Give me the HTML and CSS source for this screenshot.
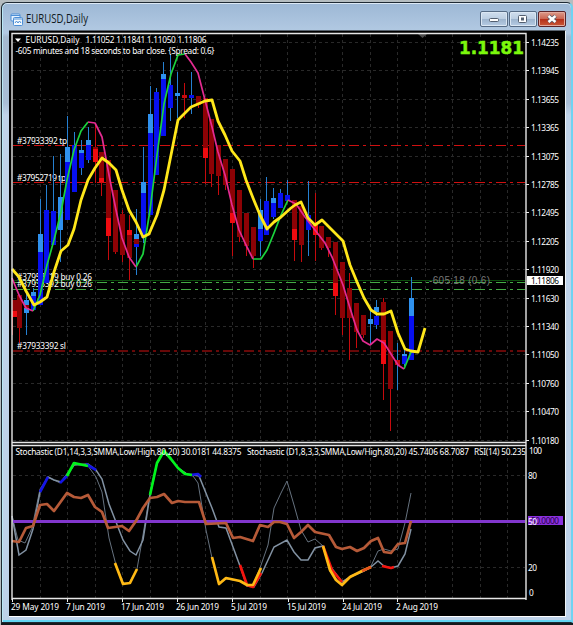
FILE: index.html
```html
<!DOCTYPE html>
<html lang="en">
<head>
<meta charset="utf-8">
<title>EURUSD,Daily</title>
<link rel="stylesheet" href="styles.css">
</head>
<body>
<div class="window">
  <header class="titlebar">
    <svg class="app-icon" width="13" height="13" viewBox="0 0 13 13">
      <rect x="1" y="1" width="9" height="7" rx="1" fill="#e8f3ff" stroke="#4d8fd6"/>
      <path d="M1 2.500h9" stroke="#4d8fd6"/>
      <rect x="3.500" y="4.500" width="9" height="8" rx="1" fill="#f4faff" stroke="#4d8fd6"/>
      <path d="M3.500 6h9M5 10l1.500-2 1.500 2 1.500-2 1.500 2" stroke="#4d8fd6" fill="none"/>
    </svg>
    <svg class="title" width="80" height="20"><text x="0" y="14" textLength="62" lengthAdjust="spacingAndGlyphs">EURUSD,Daily</text></svg>
    <div class="controls">
      <span class="btn"><svg width="26" height="14"><rect x="8.500" y="6.500" width="9" height="3" rx="1" fill="#fff" stroke="#535f70"/></svg></span>
      <span class="btn"><svg width="26" height="14"><rect x="8.500" y="3.500" width="8" height="7" rx="1" fill="#fff" stroke="#535f70"/><rect x="11.500" y="6" width="2" height="2" fill="#b8cbe0" stroke="#535f70"/></svg></span>
      <span class="btn close"><svg width="26" height="14"><path d="M9.500 4l7 6M16.500 4l-7 6" stroke="#555a68" stroke-width="4"/><path d="M9.500 4l7 6M16.500 4l-7 6" stroke="#fff" stroke-width="2.400"/></svg></span>
    </div>
  </header>
  <main class="panel">
    <svg id="chart" class="chart" width="556" height="585" viewBox="9 31 556 585">
      <g id="grid" class="grid"></g>
      <path d="M418 34h9l-4.500 4z" fill="#4a4a4a"/>
      <g class="order red"><path d="M13 145.500H525M13 182.500H525M13 351H525"/></g>
      <path d="M13 280.500H525" stroke="#0b4a0b"/>
      <g class="order green"><path d="M13 282.500H525M13 289.500H525"/></g>
      <g class="label">
        <text x="17" y="143.500" textLength="50">#37933392 tp</text>
        <text x="17" y="180.500" textLength="49">#37952719 tp</text>
        <text x="17" y="280" textLength="75">#37952719 buy 0.26</text>
        <text x="17" y="287" textLength="75">#37933392 buy 0.26</text>
        <text x="17" y="348.500" textLength="49">#37933392 sl</text>
      </g>
      <g id="candles"></g>
      <g class="hull up">
        <path d="M33 311L40 295 47 265 54 240 61 212 67 180 74 150 81 131 88 122"/>
        <path d="M136 267L143 254 150 210 157 155 164 104 171 74 178 55 185 54"/>
        <path d="M253 259H261L267 250 274 233 281 215 288 200"/>
        <path d="M404 369L411 352"/>
      </g>
      <g class="hull down">
        <path d="M12 278L19 295 26 308 33 311"/>
        <path d="M88 122L95 123 102 137 109 175 116 210 122 238 129 257 136 267"/>
        <path d="M185 54L191 62 198 73 205 100 212 127 218 152 225 175 232 205 239 230 246 245 253 259"/>
        <path d="M288 200L296 204 305 217 315 230 325 243 332 257 343 285 350 308 357 330 363 341 370 345 377 339 384 343 391 354 398 365 404 369"/>
      </g>
      <path class="average" d="M12 269L19 277 26 291 34 305 40 302 47 297 54 272 61 251 68 245 74 229 81 200 88 180 95 168 102 158 109 163 116 170 122 190 129 210 136 222 143 237 149 234 157 215 164 190 171 155 178 120 191 107 205 101 212 100 218 121 225 135 232 151 240 161 246 180 253 198 260 215 267 229 274 222 281 217 291 208 295 205 301 202 308 218 315 225 322 220 332 230 343 241 350 265 357 282 364 298 371 310 377 314 384 314 391 311 398 333 405 349 411 351 418 352 425 328"/>
      <text class="countdown" x="429" y="284" textLength="61">-605:18 (0.6)</text>
      <text class="price" x="459" y="54" textLength="65" lengthAdjust="spacingAndGlyphs">1.1181</text>
      <path d="M15 38.500h6l-3 3.500z" fill="#fff"/>
      <g class="label">
        <text x="25.500" y="43" textLength="54">EURUSD,Daily</text>
        <text x="85.500" y="43" textLength="121">1.11052 1.11841 1.11050 1.11806</text>
        <text x="15.500" y="54" textLength="199">-605 minutes and 18 seconds to bar close. {Spread: 0.6}</text>
      </g>

      <path class="fast" d="M12 516L18 540 25 543 32 528 40 489 48 477 60 483 74 464 88 466 96 477 102 492 109 538 116 565 123 583 129 583 137 569 143 535 150 493 157 463 164 451 178 468 187 474 193 476 198 483 206 530 212 558 219 584 226 579 240 581 252 587 260 568 268 545 274 508 281 493 287 481 294 505 301 530 308 542 315 539 323 546 330 572 342 585 350 576 364 570 371 566 378 551 384 549 391 551 398 549 405 523 411 493"/>
      <path class="slow" d="M12 516L19 555 26 550 33 529 40 492 48 477 54 480 61 482 67 475 74 465 88 464 96 470 102 479 109 504 116 522 123 540 130 551 136 555 143 540 150 495 157 463 164 451 178 468 187 474 199 476 212 508 219 527 226 528 233 547 240 566 247 586 254 587 262 573 274 547 287 540 294 552 301 560 308 560 315 548 323 546 330 566 342 582 350 577 364 571 371 567 378 561 384 566 391 568 398 566 405 554 411 529"/>
      <path d="M13 521.500H525" stroke="#8136cd" stroke-width="3"/>
      <g class="stoch">
        <path class="over" d="M40 492L48 477M60 483L67 476M86 464L96 470M190 475L198 474 201 477"/>
        <path class="peak" d="M67 476L74 463 88 466M150 495L157 463 164 451 171 459 178 468 185 474 192 475"/>
        <path class="low" d="M240 565L247 585 253 587 261 573M323 546L332 570 342 582M382 566L391 568 394 567"/>
        <path class="base" d="M115 563L123 584 130 583 137 569M212 557L219 584 226 578 240 581 247 585 253 585 261 568M323 546L330 570 336 580 342 585 350 577 364 570 371 567"/>
        <path class="end" d="M362 571L371 567"/>
      </g>
      <path class="rsi" d="M12 541L19 542 26 528 33 526 40 505 47 504 54 511 67 493 74 497 81 498 88 495 95 507 102 512 108 528 122 526 129 531 136 521 143 508 150 498 157 497 164 494 172 503 178 501 185 502 199 502 206 524 226 523 233 538 240 537 253 541 260 525 268 527 274 522 280 522 287 524 294 538 301 532 308 525 315 532 329 535 336 547 342 549 350 547 357 551 364 548 371 541 378 538 384 552 391 553 398 544 405 543 411 521"/>
      <g class="label">
        <text x="15.500" y="455" textLength="226">Stochastic (D1,14,3,3,SMMA,Low/High,80,20) 30.0181 44.8375</text>
        <text x="247" y="455" textLength="222">Stochastic (D1,8,3,3,SMMA,Low/High,80,20) 45.7406 68.7087</text>
        <text x="474" y="455" textLength="52">RSI(14) 50.235</text>
      </g>
      <rect x="525.500" y="445" width="9" height="15" fill="#000"/>
      <path class="frame" d="M12 600V33.500H526V600M11.500 442.500H526.500M11.500 445.500H526.500M11.500 598.500H526.500"/>
      <g id="axis" class="label axis"></g>
      <rect x="527" y="276" width="36" height="9" fill="#fff"/>
      <text class="current" x="531" y="284" textLength="28">1.11806</text>
      <rect x="528" y="516" width="35" height="9" fill="#8b31df"/>
      <text class="current level" x="531" y="524" textLength="28">50.0000</text>
      <g class="label axis">
        <text x="529" y="454" textLength="13">100</text><text x="528" y="479" textLength="9">80</text><text x="528" y="524.500" textLength="9">50</text><text x="528" y="571" textLength="9">20</text><text x="529" y="596">0</text>
      </g>
    </svg>
  </main>
</div>
<script src="chart.js"></script>
</body>
</html>
```
FILE: styles.css
```css
body { margin: 0; background: #b5bdc0; overflow: hidden; }
.window {
  box-sizing: border-box;
  width: 572px;
  height: 621px;
  margin: 2px 0 2px 1px;
  padding: 0 5px 0 7px;
  border: 1px solid #1f2a33;
  border-right: 2px solid #6fd3f2;
  border-radius: 6px 6px 0 0;
  background: linear-gradient(#9db8d5, #b3cae3 30px, #a5b9cf 34px, #a9bed6 100px, #c0d3e9 112px, #bdd2e9 100%);
  box-shadow: inset 1px 0 #b9e8f5, inset 0 -2px #62d6f3, inset 0 1px #dce9f5, 0 2px #15191c;
}
.titlebar { display: flex; align-items: center; height: 27px; padding: 3px 0 0 0; box-sizing: border-box; }
.app-icon { margin: 2px 3px 0 1px; }
.title { font: 12px "Open Sans", sans-serif; fill: #101820; margin-top: 2px; }
.controls { display: flex; gap: 1px; margin-left: auto; margin-top: 1px; }
.btn {
  box-sizing: border-box;
  width: 28px;
  height: 16px;
  border: 1px solid #566b85;
  border-radius: 2px;
  background: linear-gradient(#d0deee, #bccee2 48%, #9cb3cd 50%, #b6cce4);
  box-shadow: inset 0 0 0 1px #dbe7f3;
}
.btn svg { display: block; }
.close { border-color: #5b2328; background: linear-gradient(#dc9b8b, #cb6552 48%, #b32d18 50%, #cb5938); box-shadow: inset 0 0 0 1px #e3a99d; }
.panel { width: 556px; height: 585px; background: #000; border: solid; border-width: 1px 1px 1px 0; border-color: #59636e #eef3f6 #fff; }
.chart { display: block; fill: none; }
.grid { stroke: #292929; stroke-dasharray: 3 3; }
.order { stroke-dasharray: 10 4 3 4; }
.red { stroke: #cf1010; }
.green { stroke: #44a944; }
.hull { stroke-width: 1.7; stroke-linejoin: round; }
.up { stroke: #1bd33d; }
.down { stroke: #e32b91; }
.average { stroke: #ffe71a; stroke-width: 2.8; stroke-linejoin: round; }
.label { fill: #fff; font: 8.3px "Noto Sans", sans-serif; }
.countdown { fill: #777; font: 10px "Liberation Sans", sans-serif; }
.price { fill: #7cf80c; stroke: #7cf80c; stroke-width: 0.5px; font: 900 17.5px "DejaVu Sans", sans-serif; }
.current { fill: #000; font: 8.3px "Noto Sans", sans-serif; }
.level { fill: #270048; }
.frame { stroke: #e6e6e6; stroke-width: 1.4; }
.fast { stroke: #66727f; }
.slow { stroke: #8292a3; stroke-width: 1.5; }
.stoch { stroke-width: 2.7; stroke-linejoin: round; }
.over { stroke: #1515e6; }
.peak { stroke: #00f41c; }
.low { stroke: #f5140e; }
.base { stroke: #ffb914; }
.end { stroke: #e5541e; }
.rsi { stroke: #b65a38; stroke-width: 2.7; stroke-linejoin: round; }
```
FILE: chart.js
```js
const NS = 'http://www.w3.org/2000/svg';
function add(parent, tag, attrs, text) {
  const el = document.createElementNS(NS, tag);
  for (const key in attrs) el.setAttribute(key, attrs[key]);
  if (text) el.textContent = text;
  parent.appendChild(el);
}
const grid = document.getElementById('grid');
const axis = document.getElementById('axis');
for (let i = 0; i < 18; i++) {
  const x = Math.floor(40 + i * 27.5) + 0.5;
  add(grid, 'path', { d: `M${x} 34V442M${x} 446V598` });
}
['1.14235', '1.13945', '1.13655', '1.13365', '1.13075', '1.12785', '1.12495', '1.12205', '1.11920', '1.11630', '1.11340', '1.11050', '1.10760', '1.10470', '1.10180'].forEach((price, i) => {
  const y = Math.floor(42.5 + i * 28.4) + 0.5;
  add(grid, 'path', { d: `M13 ${y}H525` });
  add(axis, 'path', { d: `M526 ${y}h3`, stroke: '#eee' });
  add(axis, 'text', { x: 531, y: y + 3, textLength: 28 }, price);
});
[475.5, 567.5].forEach(y => add(grid, 'path', { d: `M13 ${y}H525` }));
[['29 May 2019', 11, 48], ['7 Jun 2019', 66, 39], ['17 Jun 2019', 121, 43], ['26 Jun 2019', 176, 43], ['5 Jul 2019', 231, 36], ['15 Jul 2019', 287, 39], ['24 Jul 2019', 342, 40], ['2 Aug 2019', 396, 42]].forEach(([date, x, width]) => {
  add(axis, 'path', { d: `M${x + 1.5} 599v3`, stroke: '#eee' });
  add(axis, 'text', { x, y: 609.5, textLength: width }, date);
});

// [wick colour, wick top, wick bottom, [body colour, top, bottom]...]
const colours = { l: '#2f91ee', b: '#0710ef', w: '#2580d2', r: '#ef0b10', d: '#8d0205', k: '#c60a0d' };
const candles = [
  ['k',300,335,['d',300,311],['r',311,317]], ['k',295,343,['d',295,328]],
  ['w',290,335,['l',300,313],['d',305,308]], ['w',288,310,['l',292,296],['b',296,310]],
  ['w',199,305,['l',234,252],['b',252,305]], ['w',185,283,['b',210,283]],
  ['w',156,245,['b',211,245]], ['w',154,262,['l',197,230]],
  ['w',116,220,['l',147,162],['b',162,220]], ['w',132,192,['b',145,192]],
  ['w',140,175,['l',150,153],['b',153,168]], ['w',127,163,['l',140,145],['b',145,160]],
  ['k',123,183,['d',147,149],['r',149,162]], ['k',152,196,['d',152,178],['r',178,182]],
  ['k',160,260,['d',160,218],['r',218,236]], ['k',190,254,['d',190,252]],
  ['k',210,262,['d',214,255]], ['k',215,280,['r',230,235],['d',235,258]],
  ['w',209,275,['l',234,239],['d',239,244],['b',244,247]], ['w',147,243,['l',182,193],['b',193,238]],
  ['w',86,215,['l',114,133],['b',133,215]], ['w',88,175,['b',92,175]],
  ['w',62,136,['l',74,79],['b',79,136]], ['w',54,121,['b',85,108]],
  ['w',72,118,['l',93,96]], ['k',83,118,['k',95,98]],
  ['w',72,114,['b',95,98]], ['k',96,108,['d',96,105]],
  ['k',98,184,['d',98,148],['r',148,158]], ['k',119,187,['d',119,174]],
  ['k',145,195,['d',145,176]], ['k',159,190,['d',159,185]],
  ['k',169,256,['d',169,213],['r',213,223]], ['k',190,242,['d',190,237]],
  ['k',213,256,['d',213,246]], ['k',227,268,['d',227,256]],
  ['w',199,256,['l',210,229],['b',229,241]], ['w',177,235,['b',201,235]],
  ['w',188,219,['l',198,203],['b',203,217]], ['w',189,208,['b',193,208]],
  ['w',180,201,['b',195,201]], ['k',200,261,['d',200,229],['r',229,240]],
  ['k',206,262,['d',206,245]], ['w',181,256,['b',215,230]],
  ['k',193,261,['r',225,235]], ['k',226,250,['d',226,248]],
  ['k',237,257,['d',237,248]], ['k',242,315,['d',242,283],['r',283,296]],
  ['k',262,335,['d',262,318]], ['k',273,360,['d',288,318]],
  ['k',303,348,['d',303,332]], ['k',315,338,['d',315,335]],
  ['w',308,345,['l',319,324]], ['w',300,329,['l',307,312],['b',316,325]],
  ['k',298,400,['d',302,340],['r',340,364]], ['k',331,431,['d',331,389]],
  ['w',343,390,['k',360,365]], ['w',350,366,['l',354,356],['b',356,364]],
  ['w',277,360,['l',298,316],['b',316,360]]
];
const layer = document.getElementById('candles');
candles.forEach(([wick, top, bottom, ...bodies], i) => {
  const x = Math.floor(12.5 + i * 6.875);
  add(layer, 'rect', { x, y: top, width: 1, height: bottom - top, fill: colours[wick] });
  bodies.forEach(([colour, y1, y2]) => add(layer, 'rect', { x: Math.max(12, x - 2), y: y1, width: 5, height: y2 - y1, fill: colours[colour] }));
});
```
